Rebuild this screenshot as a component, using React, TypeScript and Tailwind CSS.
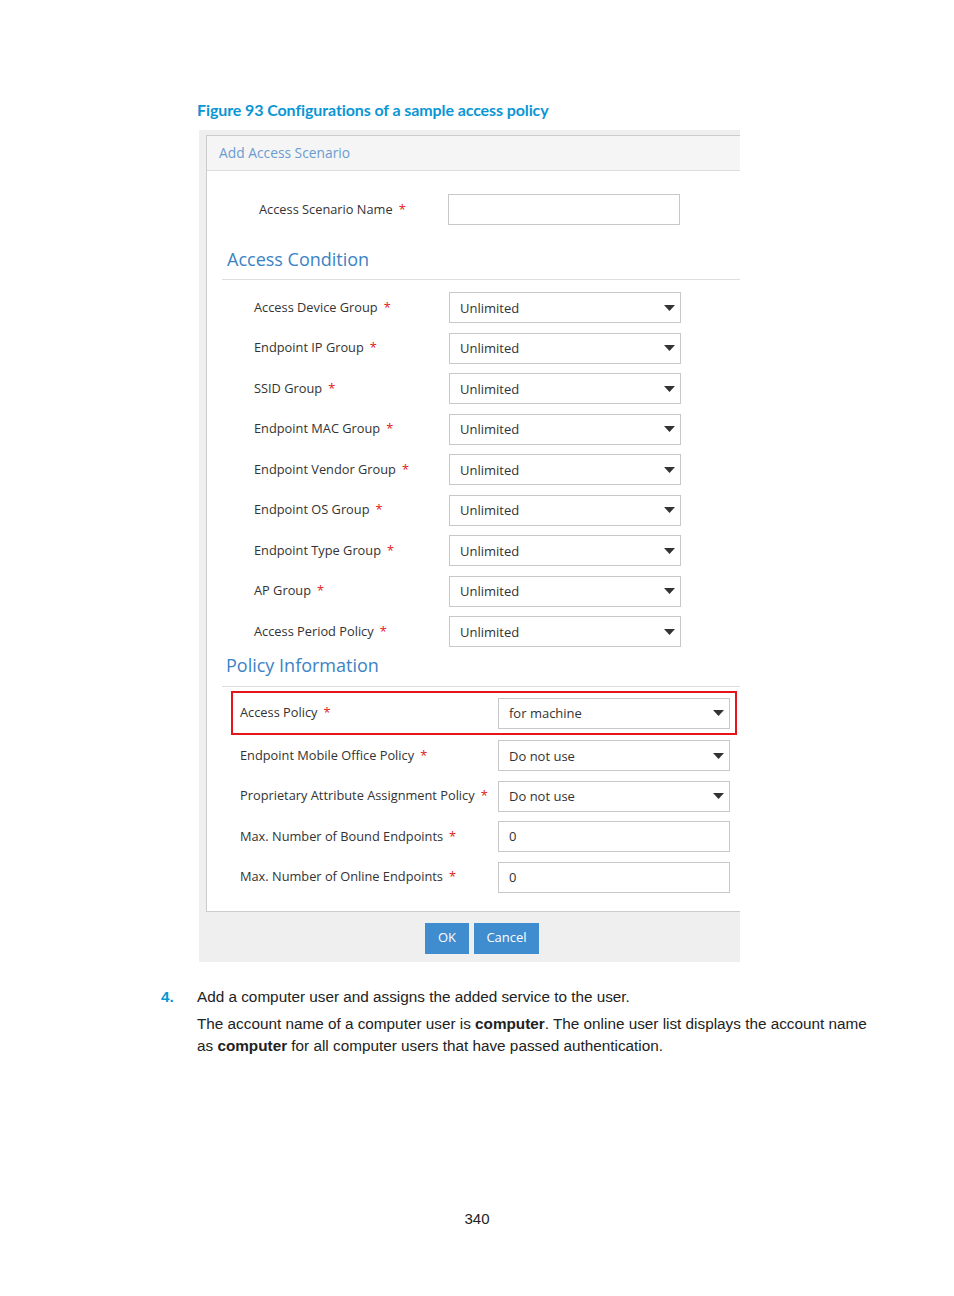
import React from "react";

const conditions = [
  "Access Device Group",
  "Endpoint IP Group",
  "SSID Group",
  "Endpoint MAC Group",
  "Endpoint Vendor Group",
  "Endpoint OS Group",
  "Endpoint Type Group",
  "AP Group",
  "Access Period Policy",
];

function Arrow() {
  return (
    <svg width="11" height="6" viewBox="0 0 11 6" className="shrink-0">
      <polygon points="0,0 11,0 5.5,6" fill="#333" />
    </svg>
  );
}

function Select({ value, w = "w-[232px]" }: { value: string; w?: string }) {
  return (
    <div
      className={`${w} h-[31px] border border-[#c8c8c8] bg-white flex items-center justify-between pl-[10px] pr-[5px] text-[13px] text-[#333]`}
    >
      <span className="pt-[2px]">{value}</span>
      <Arrow />
    </div>
  );
}

function Input({ value = "" }: { value?: string }) {
  return (
    <div className="w-[232px] h-[31px] border border-[#c8c8c8] bg-white flex items-center pl-[10px] pt-[1px] text-[13px] text-[#333]">
      {value}
    </div>
  );
}

function Star() {
  return <span className="text-[#e02020] ml-[6px]">*</span>;
}

export default function App() {
  const seg = { fontFamily: '"Open Sans", "Noto Sans", sans-serif' };
  return (
    <div className="w-[954px] h-[1296px] bg-white pt-[99px]" style={seg}>
      <div
        className="ml-[197px] text-[16px] leading-[22px] text-[#0a96d4] tracking-[-0.1px]"
        style={{ fontFamily: '"Lato", "Open Sans", sans-serif', fontWeight: 700 }}
      >
        Figure 93 Configurations of a sample access policy
      </div>
      <div className="ml-[199px] mt-[9px] w-[541px] bg-[#efefef] pt-[5px] pl-[7px] pb-[8px]">
        <div className="bg-white border-l border-t border-b border-[#cccccc]">
          <div className="h-[35px] bg-[#f5f5f5] border-b border-[#dddddd] flex items-center pl-[12px] text-[13.8px] text-[#6a9cd0]">
            Add Access Scenario
          </div>
          <div className="pt-[23px]">
            <div className="flex items-center h-[31px] text-[12.8px] text-[#333]">
              <div className="w-[241px] pl-[52px]">
                Access Scenario Name
                <Star />
              </div>
              <Input />
            </div>
            <div className="ml-[15px] mt-[22px] border-b border-[#dddddd] pb-[8px]">
              <div className="pl-[5px] text-[18px] leading-[24px] text-[#3b83c4]">
                Access Condition
              </div>
            </div>
            <div className="mt-[12px] flex flex-col gap-[9.5px]">
              {conditions.map((c) => (
                <div key={c} className="flex items-center h-[31px] text-[12.8px] text-[#333]">
                  <div className="w-[242px] pl-[47px]">
                    {c}
                    <Star />
                  </div>
                  <Select value="Unlimited" />
                </div>
              ))}
            </div>
            <div className="ml-[15px] mt-[6px] border-b border-[#dddddd] pb-[9px]">
              <div className="pl-[4px] text-[18px] leading-[24px] text-[#3b83c4]">
                Policy Information
              </div>
            </div>
            <div className="ml-[24px] mt-[4px] w-[506px] h-[44px] border-2 border-[#e8141c] flex items-center">
              <div className="w-[265px] pl-[7px] text-[12.8px] text-[#333]">
                Access Policy
                <Star />
              </div>
              <Select value="for machine" />
            </div>
            <div className="mt-[5px] flex flex-col gap-[9.5px] pb-[18px]">
              {[
                ["Endpoint Mobile Office Policy", "sel", "Do not use"],
                ["Proprietary Attribute Assignment Policy", "sel", "Do not use"],
                ["Max. Number of Bound Endpoints", "in", "0"],
                ["Max. Number of Online Endpoints", "in", "0"],
              ].map(([l, t, v]) => (
                <div key={l} className="flex items-center h-[31px] text-[12.8px] text-[#333]">
                  <div className="w-[291px] pl-[33px]">
                    {l}
                    <Star />
                  </div>
                  {t === "sel" ? <Select value={v} /> : <Input value={v} />}
                </div>
              ))}
            </div>
          </div>
        </div>
        <div className="mt-[11px] flex justify-center gap-[5px] pl-[18px]">
          <div className="w-[44px] h-[31px] bg-[#3f8ccf] text-white text-[13px] flex items-center justify-center">
            OK
          </div>
          <div className="w-[65px] h-[31px] bg-[#3f8ccf] text-white text-[13px] flex items-center justify-center">
            Cancel
          </div>
        </div>
      </div>
      <div
        className="mt-[24px] text-[15.3px] leading-[22px] text-[#222]"
        style={{ fontFamily: '"Liberation Sans", sans-serif' }}
      >
        <div className="flex">
          <div className="w-[36px] ml-[161px] text-[#0a96d4] font-bold">4.</div>
          <div>Add a computer user and assigns the added service to the user.</div>
        </div>
        <div className="ml-[197px] mt-[5px] w-[700px]">
          The account name of a computer user is <b>computer</b>. The online user list displays the account name
          <br />
          as <b>computer</b> for all computer users that have passed authentication.
        </div>
      </div>
      <div
        className="mt-[151px] text-center text-[15px] leading-[22px] text-[#222]"
        style={{ fontFamily: '"Liberation Sans", sans-serif' }}
      >
        340
      </div>
    </div>
  );
}
